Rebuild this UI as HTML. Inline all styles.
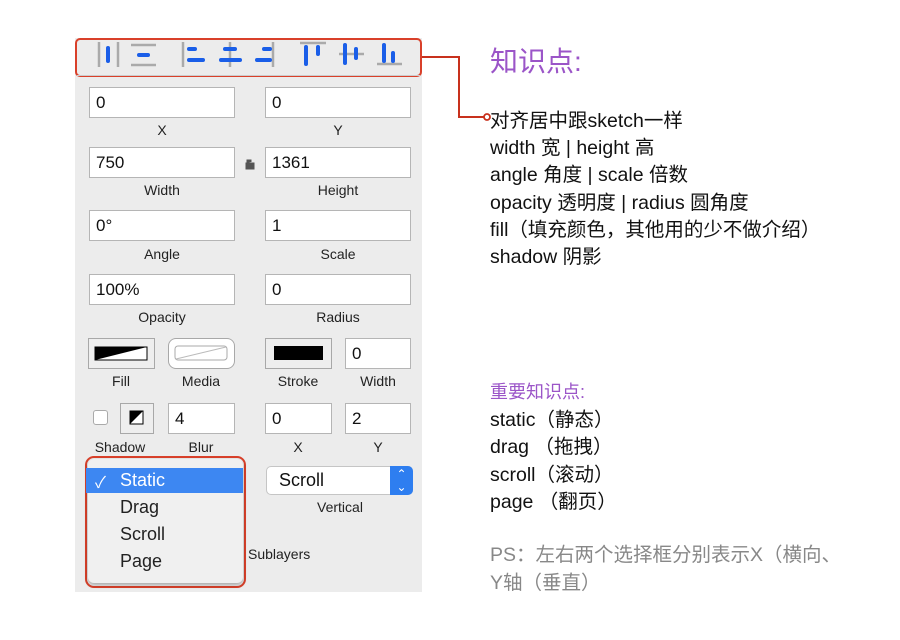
<!DOCTYPE html>
<html><head><meta charset="utf-8"><style>
*{margin:0;padding:0;box-sizing:border-box}
body{width:900px;height:640px;background:#fff;position:relative;overflow:hidden;font-family:"Liberation Sans","Noto Sans CJK SC",sans-serif}
.a{position:absolute}
#panel{left:75px;top:38px;width:347px;height:554px;background:#ececec}
.in{position:absolute;background:#fff;border:1px solid #b5b5b5;font-size:17px;color:#111;padding:5px 0 0 6px;height:31px}
.lb{position:absolute;font-size:14px;color:#222;text-align:center;width:146px}
.sw{position:absolute;border:1px solid #a8a8a8;background:#eee;height:31px}
.t{position:absolute;left:490px;font-size:19.5px;color:#111;white-space:nowrap}
.g{color:#888}
</style></head><body>
<div id="panel" class="a"></div>
<div class="a" style="left:75px;top:38px;width:347px;height:39px;border:2px solid #d9402a;border-radius:5px;background:#ececec"></div>
<div class="a" style="left:77px;top:75px;width:343px;height:1px;background:#ccc"></div>
<svg class="a" style="left:0;top:0" width="900" height="640">
<g stroke="#aaa" stroke-width="2.5" fill="none">
<line x1="99" y1="42" x2="99" y2="67"/><line x1="118" y1="42" x2="118" y2="67"/>
<line x1="131" y1="45" x2="156" y2="45"/><line x1="131" y1="65" x2="156" y2="65"/>
<line x1="183" y1="42" x2="183" y2="67"/>
<line x1="230" y1="42" x2="230" y2="67"/>
<line x1="273" y1="42" x2="273" y2="67"/>
<line x1="300" y1="43" x2="326" y2="43"/>
<line x1="339" y1="54" x2="364" y2="54"/>
<line x1="377" y1="64" x2="402" y2="64"/>
</g>
<g stroke="#1a5ee8" stroke-width="4" stroke-linecap="round" fill="none">
<line x1="108" y1="48" x2="108" y2="61"/>
<line x1="139" y1="55" x2="148" y2="55"/>
<line x1="189" y1="49" x2="195" y2="49"/><line x1="189" y1="60" x2="203" y2="60"/>
<line x1="225" y1="49" x2="235" y2="49"/><line x1="221" y1="60" x2="240" y2="60"/>
<line x1="264" y1="49" x2="270" y2="49"/><line x1="257" y1="60" x2="270" y2="60"/>
<line x1="306" y1="47" x2="306" y2="64"/><line x1="318" y1="47" x2="318" y2="54"/>
<line x1="345" y1="45" x2="345" y2="63"/><line x1="356" y1="49" x2="356" y2="58"/>
<line x1="384" y1="45" x2="384" y2="61"/><line x1="393" y1="53" x2="393" y2="61"/>
</g>
<polyline points="422,57 459,57 459,117 484,117" fill="none" stroke="#c8311d" stroke-width="2"/>
<circle cx="487" cy="117" r="3" fill="#fff" stroke="#c8311d" stroke-width="1.8"/>
<path d="M246 163h8v6h-8z M247 163v-3h4v2" fill="#555" stroke="#555" stroke-width="1"/>
</svg>

<div class="in" style="left:89px;top:87px;width:146px">0</div>
<div class="in" style="left:265px;top:87px;width:146px">0</div>
<div class="lb" style="left:89px;top:122px">X</div>
<div class="lb" style="left:265px;top:122px">Y</div>
<div class="in" style="left:89px;top:147px;width:146px">750</div>
<div class="in" style="left:265px;top:147px;width:146px">1361</div>
<div class="lb" style="left:89px;top:182px">Width</div>
<div class="lb" style="left:265px;top:182px">Height</div>
<div class="in" style="left:89px;top:210px;width:146px">0°</div>
<div class="in" style="left:265px;top:210px;width:146px">1</div>
<div class="lb" style="left:89px;top:246px">Angle</div>
<div class="lb" style="left:265px;top:246px">Scale</div>
<div class="in" style="left:89px;top:274px;width:146px">100%</div>
<div class="in" style="left:265px;top:274px;width:146px">0</div>
<div class="lb" style="left:89px;top:309px">Opacity</div>
<div class="lb" style="left:265px;top:309px">Radius</div>

<div class="sw" style="left:88px;top:338px;width:67px"><svg width="65" height="29"><rect x="6" y="8" width="52" height="13" fill="#fff" stroke="#000"/><polygon points="6,21 58,8 6,8" fill="#000"/></svg></div>
<div class="sw" style="left:168px;top:338px;width:67px;border-radius:8px;background:#fff"><svg width="65" height="29"><rect x="6" y="7" width="52" height="14" rx="3" fill="#fff" stroke="#aaa"/><line x1="7" y1="20" x2="57" y2="8" stroke="#bbb"/></svg></div>
<div class="sw" style="left:265px;top:338px;width:67px"><div style="margin:7px 8px;height:14px;background:#000"></div></div>
<div class="in" style="left:345px;top:338px;width:66px">0</div>
<div class="lb" style="left:48px;top:373px">Fill</div>
<div class="lb" style="left:128px;top:373px">Media</div>
<div class="lb" style="left:225px;top:373px">Stroke</div>
<div class="lb" style="left:305px;top:373px">Width</div>

<div class="a" style="left:93px;top:410px;width:15px;height:15px;background:#fff;border:1px solid #aaa;border-radius:3px"></div>
<div class="sw" style="left:120px;top:403px;width:34px"><svg width="32" height="29"><rect x="9" y="7" width="13" height="13" fill="#fff" stroke="#000"/><polygon points="9,20 22,7 9,7" fill="#000"/></svg></div>
<div class="in" style="left:168px;top:403px;width:67px">4</div>
<div class="in" style="left:265px;top:403px;width:67px">0</div>
<div class="in" style="left:345px;top:403px;width:66px">2</div>
<div class="lb" style="left:47px;top:439px">Shadow</div>
<div class="lb" style="left:128px;top:439px">Blur</div>
<div class="lb" style="left:225px;top:439px">X</div>
<div class="lb" style="left:305px;top:439px">Y</div>

<div class="a" style="left:266px;top:466px;width:147px;height:29px;background:#fff;border:1px solid #c5c5c5;border-radius:5px;font-size:18px;padding:3px 0 0 12px;color:#111">Scroll</div>
<div class="a" style="left:390px;top:466px;width:23px;height:29px;background:#2e7ef0;border-radius:0 5px 5px 0;color:#fff;font-size:12px;text-align:center;line-height:13px;padding-top:2px">⌃<br>⌄</div>
<div class="lb" style="left:267px;top:499px">Vertical</div>
<div class="a" style="left:248px;top:546px;font-size:14px;color:#222">Sublayers</div>

<div class="a" style="left:85px;top:456px;width:161px;height:132px;border:2px solid #d9402a;border-radius:9px"></div>
<div class="a" style="left:88px;top:459px;width:155px;height:124px;background:#f0f0f0;border-radius:6px;box-shadow:0 2px 4px rgba(0,0,0,.3)"></div>
<div class="a" style="left:86px;top:468px;width:157px;height:25px;background:#3d87f2"></div>
<div class="a" style="left:95px;top:469px;font-size:16px;color:#fff">✓</div>
<div class="a" style="left:120px;top:470px;font-size:18px;color:#fff">Static</div>
<div class="a" style="left:120px;top:497px;font-size:18px;color:#222">Drag</div>
<div class="a" style="left:120px;top:524px;font-size:18px;color:#222">Scroll</div>
<div class="a" style="left:120px;top:551px;font-size:18px;color:#222">Page</div>

<div class="t" style="top:40px;font-size:28px;color:#9b55c8">知识点:</div>
<div class="t" style="top:104px">对齐居中跟sketch一样</div>
<div class="t" style="top:131px">width 宽 | height 高</div>
<div class="t" style="top:158px">angle 角度 | scale 倍数</div>
<div class="t" style="top:186px">opacity 透明度 | radius 圆角度</div>
<div class="t" style="top:213px">fill（填充颜色，其他用的少不做介绍）</div>
<div class="t" style="top:240px">shadow 阴影</div>

<div class="t" style="top:378px;font-size:18px;color:#9b55c8">重要知识点:</div>
<div class="t" style="top:403px">static（静态）</div>
<div class="t" style="top:430px">drag （拖拽）</div>
<div class="t" style="top:458px">scroll（滚动）</div>
<div class="t" style="top:485px">page （翻页）</div>
<div class="t g" style="top:538px">PS：左右两个选择框分别表示X（横向、</div>
<div class="t g" style="top:566px">Y轴（垂直）</div>
</body></html>
